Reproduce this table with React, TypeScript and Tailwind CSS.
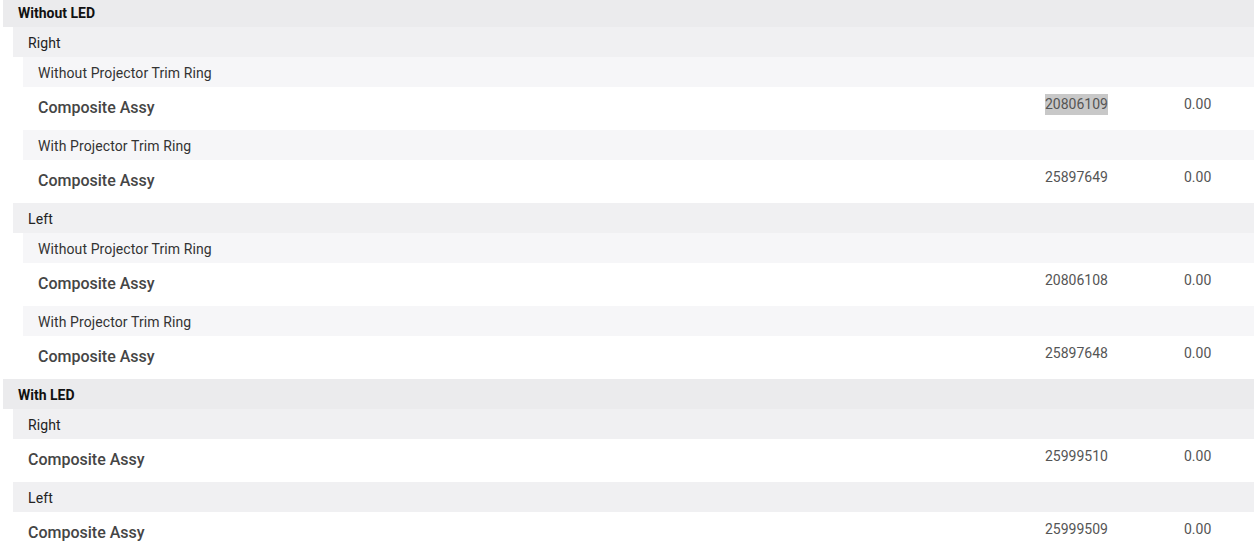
import React from "react";

type Item = { name: string; num: string; val: string; hl?: boolean };

const ItemRow = ({ item }: { item: Item }) => (
  <div className="flex h-[43px] bg-white">
    <div className="flex-1 flex items-center pl-[15px] pb-[2px] text-[16px] font-medium text-[#454545]">
      {item.name}
    </div>
    <div className="w-[139px] pt-[5px]">
      <span className={"inline-block leading-[21px] text-[14px] text-[#555] " + (item.hl ? "bg-[#c8c8c8]" : "")}>
        {item.num}
      </span>
    </div>
    <div className="w-[70px] pt-[5px]">
      <span className="inline-block leading-[21px] text-[14px] text-[#555]">{item.val}</span>
    </div>
  </div>
);

const L1 = ({ title }: { title: string }) => (
  <div className="h-[30px] flex items-center pl-[15px] pt-[3px] bg-[#ebebed] text-[14px] font-bold text-[#111]">
    {title}
  </div>
);
const L2 = ({ title }: { title: string }) => (
  <div className="h-[30px] flex items-center pl-[15px] pt-[3px] bg-[#f0f0f2] text-[14px] tracking-[0.1px] text-[#222]">{title}</div>
);
const L3 = ({ title }: { title: string }) => (
  <div className="h-[30px] flex items-center pl-[15px] pt-[3px] bg-[#f6f6f8] text-[14px] tracking-[0.1px] text-[#333]">{title}</div>
);

const Sub = ({ title, item }: { title: string; item: Item }) => (
  <div>
    <L3 title={title} />
    <ItemRow item={item} />
  </div>
);

export default function App() {
  return (
    <div className="w-[1254px] h-[550px] overflow-hidden bg-white" style={{ fontFamily: "Roboto, 'Liberation Sans', sans-serif" }}>
      <div className="pl-[3px] mt-[-3px]">
        <L1 title="Without LED" />
        <div className="pl-[10px]">
          <L2 title="Right" />
          <div className="pl-[10px]">
            <Sub title="Without Projector Trim Ring" item={{ name: "Composite Assy", num: "20806109", val: "0.00", hl: true }} />
            <Sub title="With Projector Trim Ring" item={{ name: "Composite Assy", num: "25897649", val: "0.00" }} />
          </div>
          <L2 title="Left" />
          <div className="pl-[10px]">
            <Sub title="Without Projector Trim Ring" item={{ name: "Composite Assy", num: "20806108", val: "0.00" }} />
            <Sub title="With Projector Trim Ring" item={{ name: "Composite Assy", num: "25897648", val: "0.00" }} />
          </div>
        </div>
        <L1 title="With LED" />
        <div className="pl-[10px]">
          <L2 title="Right" />
          <ItemRow item={{ name: "Composite Assy", num: "25999510", val: "0.00" }} />
          <L2 title="Left" />
          <ItemRow item={{ name: "Composite Assy", num: "25999509", val: "0.00" }} />
        </div>
      </div>
    </div>
  );
}
